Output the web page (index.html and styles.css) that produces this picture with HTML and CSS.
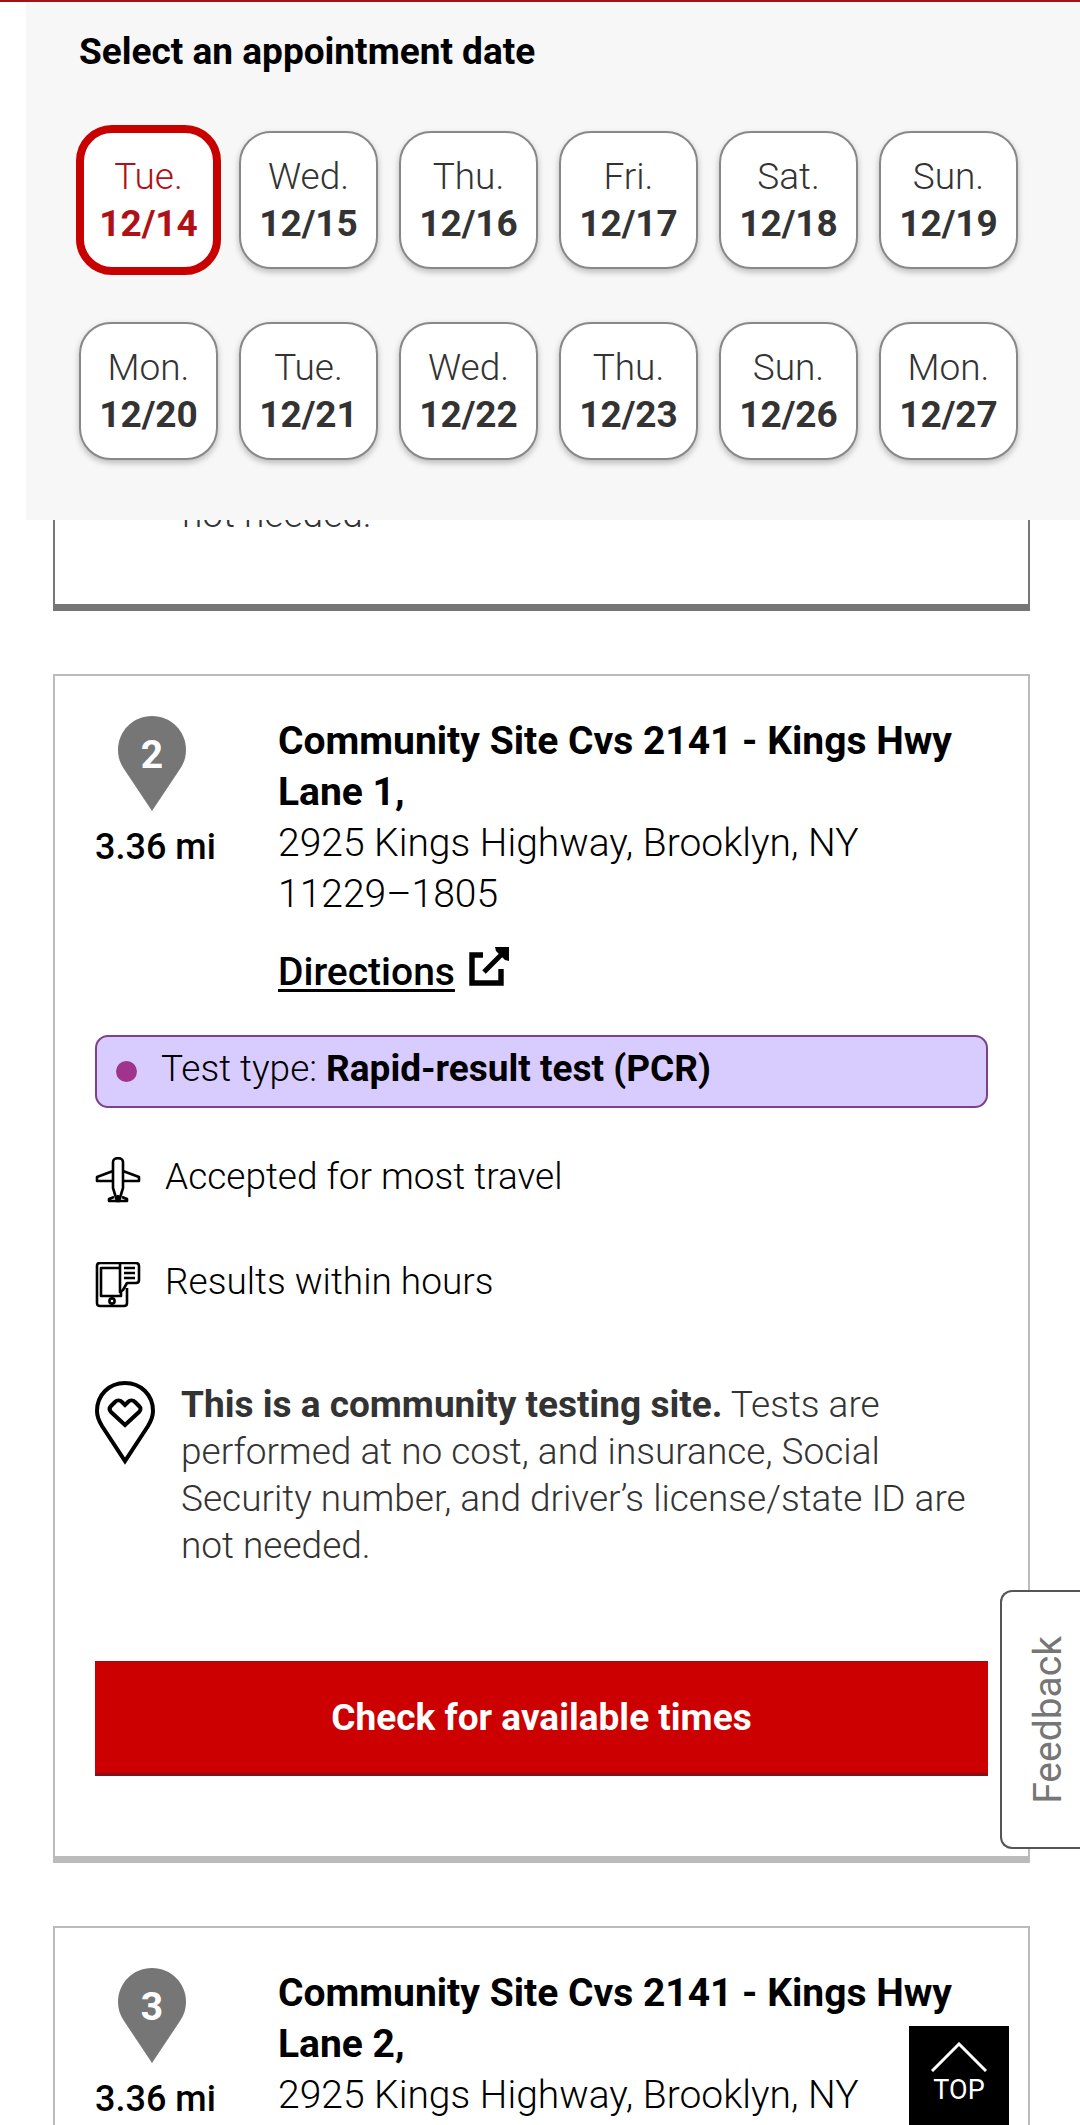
FILE: index.html
```html
<!DOCTYPE html>
<html lang="en">
<head>
    <meta charset="UTF-8">
    <meta name="viewport" content="width=device-width, initial-scale=1.0">
    <title>Select an appointment date</title>
    <link rel="stylesheet" href="styles.css">
</head>
<body>
    <header class="topbar">
        <div class="picker">
            <h2>Select an appointment date</h2>
            <div class="dates">
                <button type="button" class="date selected" aria-pressed="true">Tue. <strong>12/14</strong></button>
                <button type="button" class="date">Wed. <strong>12/15</strong></button>
                <button type="button" class="date">Thu. <strong>12/16</strong></button>
                <button type="button" class="date">Fri. <strong>12/17</strong></button>
                <button type="button" class="date">Sat. <strong>12/18</strong></button>
                <button type="button" class="date">Sun. <strong>12/19</strong></button>
                <button type="button" class="date">Mon. <strong>12/20</strong></button>
                <button type="button" class="date">Tue. <strong>12/21</strong></button>
                <button type="button" class="date">Wed. <strong>12/22</strong></button>
                <button type="button" class="date">Thu. <strong>12/23</strong></button>
                <button type="button" class="date">Sun. <strong>12/26</strong></button>
                <button type="button" class="date">Mon. <strong>12/27</strong></button>
            </div>
        </div>
    </header>

    <main class="results">
        <section class="card active">
            <p class="note-text">not needed.</p>
        </section>

        <section class="card">
            <div class="site">
                <div class="distance">
                    <svg class="pin" width="68" height="95" viewBox="0 0 68 95">
                        <path d="M34 0C15 0 0 15 0 34c0 7 2 13 6 19l28 42 28-42c4-6 6-12 6-19C68 15 53 0 34 0z" fill="#767676"/>
                        <text x="34" y="52" text-anchor="middle">2</text>
                    </svg>
                    <span>3.36 mi</span>
                </div>
                <div class="address">
                    <h3>Community Site Cvs 2141 - Kings Hwy Lane 1,</h3>
                    <p>2925 Kings Highway, Brooklyn, NY 11229–1805</p>
                    <a class="directions" href="#"><span>Directions</span>
                        <svg width="40" height="40" viewBox="0 0 40 40" fill="none" stroke="#000" stroke-width="5.4">
                            <path d="M14 8H3v28h29V22"/>
                            <path d="M15 25L35 5" stroke-width="5"/>
                            <path d="M26 0h14v14l-4-1-9-9z" fill="#000" stroke="none"/>
                        </svg>
                    </a>
                </div>
            </div>

            <div class="test-type">
                <span class="dot"></span>
                <p>Test type: <strong>Rapid-result test (PCR)</strong></p>
            </div>

            <ul class="features">
                <li>
                    <svg width="46" height="46" viewBox="0 0 46 46" fill="none" stroke="#000" stroke-width="2.6" stroke-linejoin="round">
                        <path d="M18 12V5c0-5 10-5 10 0v26l-4 13h-2l-4-13z"/>
                        <path d="M18 14L2 20v4h16M28 14l16 6v4H28"/>
                        <path d="M19 40l-5 2v2h18v-2l-5-2M23 38v6"/>
                    </svg>
                    <p>Accepted for most travel</p>
                </li>
                <li>
                    <svg width="46" height="46" viewBox="0 0 46 46" fill="none" stroke="#000" stroke-width="2.6" stroke-linejoin="round">
                        <path d="M32 26v15c0 2-1 3-3 3H5c-2 0-3-1-3-3V4c0-2 1-3 3-3h36c2 0 3 1 3 3v14c0 2-1 3-3 3h-9l-4 7-3 2V1"/>
                        <path d="M24 6H6v28h20v-5M29 6h11M29 11h11M29 16h11"/>
                        <circle cx="17" cy="39" r="2.6"/>
                    </svg>
                    <p>Results within hours</p>
                </li>
            </ul>

            <div class="note">
                <svg width="60" height="84" viewBox="0 0 60 84" fill="none" stroke="#000" stroke-width="4">
                    <path d="M30 2C14 2 2 14 2 30c0 6 2 10 5 15l23 35 23-35c3-5 5-9 5-15C58 14 46 2 30 2z"/>
                    <path d="M30 24l-3-3c-2-2-5-2-7 0l-4 4c-2 2-2 4 0 6l14 13 14-13c2-2 2-4 0-6l-4-4c-2-2-5-2-7 0z"/>
                </svg>
                <p class="note-text"><strong>This is a community testing site.</strong> Tests are performed at no cost, and insurance, Social Security number, and driver’s license/state ID are not needed.</p>
            </div>

            <button type="button" class="check">Check for available times</button>
        </section>

        <section class="card">
            <div class="site">
                <div class="distance">
                    <svg class="pin" width="68" height="95" viewBox="0 0 68 95">
                        <path d="M34 0C15 0 0 15 0 34c0 7 2 13 6 19l28 42 28-42c4-6 6-12 6-19C68 15 53 0 34 0z" fill="#767676"/>
                        <text x="34" y="52" text-anchor="middle">3</text>
                    </svg>
                    <span>3.36 mi</span>
                </div>
                <div class="address">
                    <h3>Community Site Cvs 2141 - Kings Hwy Lane 2,</h3>
                    <p>2925 Kings Highway, Brooklyn, NY</p>
                </div>
            </div>
        </section>
    </main>

    <button type="button" class="feedback">Feedback</button>
    <a class="top" href="#">
        <svg width="56" height="30" viewBox="0 0 56 30" fill="none" stroke="#fff" stroke-width="3">
            <path d="M1 29L28 2l27 27"/>
        </svg>
        TOP
    </a>
</body>
</html>
```
FILE: styles.css
```css
* {
    box-sizing: border-box;
}
body {
    height: 100vh;
    margin: 0;
    overflow: hidden;
    background-color: #fff;
    color: #000;
    font-family: Roboto, sans-serif;
    font-size: 37px;
    font-weight: 300;
    line-height: 47px;
}
h2, h3, p, ul {
    margin: 0;
    padding: 0;
}
strong {
    font-weight: 700;
}
svg {
    display: block;
    flex-shrink: 0;
}
button {
    font: inherit;
}

/* date picker, stays above the results */
.topbar {
    position: fixed;
    top: 0;
    left: 0;
    right: 0;
    z-index: 2;
    padding-left: 26px;
    border-top: 2px solid #a01217;
    background-color: #fff;
}
.picker {
    padding: 26px 62px 60px 53px;
    background-color: #f7f7f7;
}
.picker h2 {
    margin-bottom: 56px;
    font-size: 37px;
    font-weight: 700;
}
.dates {
    display: grid;
    grid-template-columns: repeat(6, 1fr);
    gap: 53px 21px;
}
.date {
    height: 138px;
    padding: 0;
    border: 2px solid #888;
    border-radius: 32px;
    background-color: #fff;
    color: #333;
    box-shadow: 0 3px 6px rgba(0, 0, 0, 0.25);
}
.date strong {
    display: block;
}
.date.selected {
    height: 150px;
    margin: -6px -3px;
    border: 8px solid #c80000;
    border-radius: 36px;
    color: #b01116;
    box-shadow: none;
}

/* result cards */
.results {
    padding: 480px 50px 0 53px;
}
.card {
    margin-bottom: 63px;
    padding: 40px 40px 80px;
    border: 2px solid #bbb;
    border-bottom-width: 7px;
}
.card.active {
    padding: 9px 40px 66px 127px;
    border-color: #767676;
}
.site {
    display: flex;
    margin-bottom: 37px;
}
.distance {
    flex: 0 0 183px;
    font-size: 36px;
    font-weight: 500;
}
.pin {
    margin: 0 0 13px 23px;
}
.pin text {
    fill: #fff;
    font-size: 39px;
    font-weight: 700;
}
.address {
    font-size: 39px;
    line-height: 51px;
}
.address h3 {
    font-size: 39px;
    font-weight: 700;
}
.directions {
    display: flex;
    gap: 14px;
    margin-top: 27px;
    color: #000;
    font-weight: 500;
    text-decoration: none;
}
.directions span {
    text-decoration: underline;
    text-decoration-thickness: 3px;
    text-underline-offset: 4px;
}
.test-type {
    display: flex;
    align-items: center;
    gap: 24px;
    margin-bottom: 45px;
    padding: 8px 19px;
    border: 2px solid #7f4089;
    border-radius: 13px;
    background-color: #d8ccff;
}
.test-type p,
.features p {
    padding-bottom: 6px;
}
.dot {
    width: 21px;
    height: 21px;
    border-radius: 50%;
    background-color: #a0348c;
}
.features {
    display: grid;
    gap: 52px;
    margin-bottom: 70px;
    list-style: none;
}
.features li {
    display: flex;
    align-items: center;
    gap: 24px;
}
.note {
    display: flex;
    gap: 26px;
    margin-bottom: 92px;
}
.note-text {
    color: #333;
}
.check {
    display: block;
    width: 100%;
    height: 115px;
    border: 0;
    border-top: 1px solid #a00a0c;
    border-bottom: 3px solid #861015;
    background-color: #c00;
    color: #fff;
    font-weight: 700;
}

/* floating controls */
.feedback {
    position: fixed;
    right: 0;
    bottom: 276px;
    width: 80px;
    height: 259px;
    padding: 0 0 0 14px;
    border: 2px solid #555;
    border-right: 0;
    border-radius: 12px 0 0 12px;
    background-color: #fff;
    color: #767676;
    font-size: 39px;
    font-weight: 400;
    writing-mode: sideways-lr;
    line-height: 64px;
}
.top {
    position: fixed;
    right: 71px;
    bottom: 0;
    display: flex;
    flex-direction: column;
    align-items: center;
    width: 100px;
    height: 99px;
    padding-top: 16px;
    background-color: #000;
    color: #fff;
    font-size: 27px;
    font-weight: 400;
    line-height: 36px;
    text-decoration: none;
}
```
